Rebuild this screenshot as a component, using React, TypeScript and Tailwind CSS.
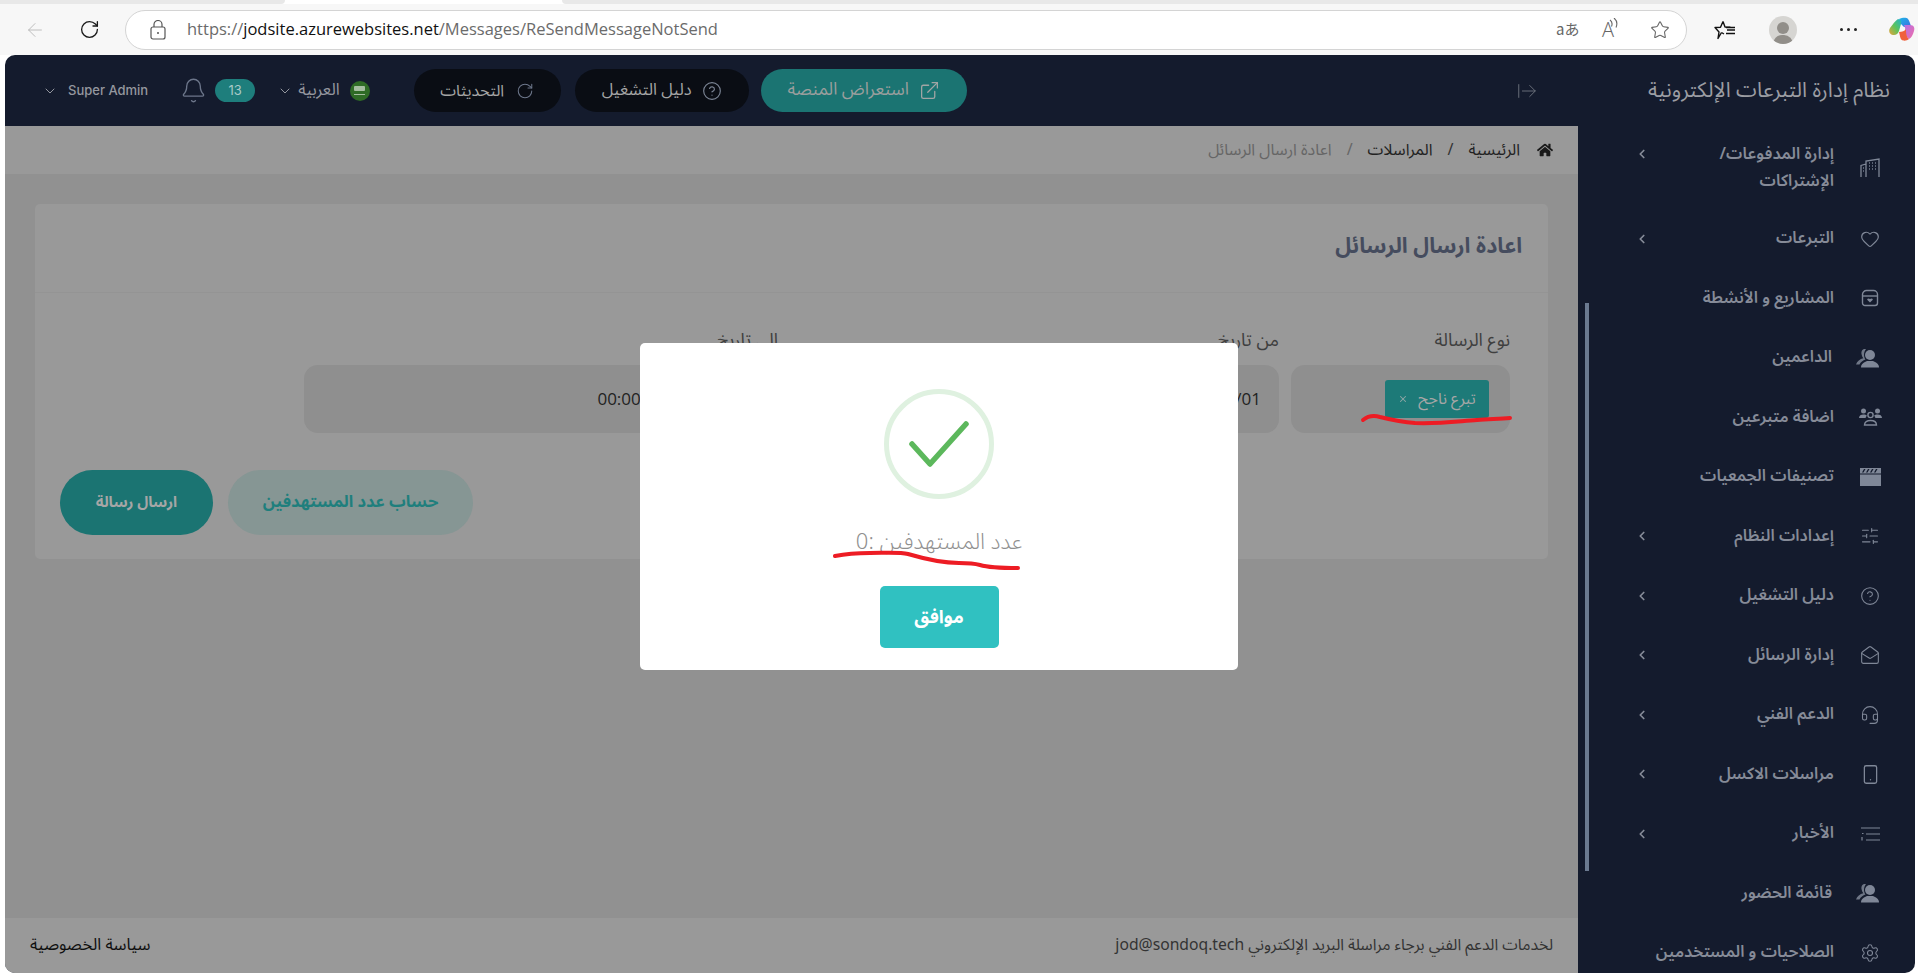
import React from "react";
import {
  ArrowLeft, RotateCw, Star, ChevronDown, ChevronLeft, Bell, CircleHelp, ExternalLink, ArrowRightFromLine,
  Heart, SlidersHorizontal, MailOpen, Headset, Smartphone, Settings, X,
} from "lucide-react";
import { FaHome } from "react-icons/fa";

const ar = "font-['Noto_Sans_Arabic','Noto_Naskh_Arabic','Noto_Sans','DejaVu_Sans',sans-serif]";

const BuildingIcon = () => (
  <svg width="20" height="20" viewBox="0 0 20 20" fill="none" stroke="currentColor" strokeWidth="1.3">
    <path d="M1 19V7.5L6 6M6 19V3l13-2v18" />
    <path d="M9 5h.9M12 5h.9M15 5h.9M9 8h.9M12 8h.9M15 8h.9M9 11h.9M12 11h.9M15 11h.9M3 10h.9M3 13h.9" strokeWidth="1.6" />
  </svg>
);
const BoxIcon = () => (
  <svg width="18" height="18" viewBox="0 0 18 18" fill="none" stroke="currentColor" strokeWidth="1.4">
    <path d="M1.5 5.500A4 4 0 0 1 5.500 1.500h7a4 4 0 0 1 4 4V14a2.500 2.500 0 0 1-2.500 2.500H4A2.500 2.500 0 0 1 1.500 14Z" />
    <path d="M1.5 7h15" />
    <path d="M9 13.500 6.400 11c-.8-1.200.9-2.300 2.600-1 1.700-1.300 3.400-.2 2.600 1Z" fill="currentColor" stroke="none" />
  </svg>
);
const DuoUserIcon = () => (
  <svg width="24" height="20" viewBox="0 0 24 20" fill="currentColor">
    <circle cx="14" cy="7" r="5" />
    <path d="M5 19.500c0-4 3.500-5.500 6-6.500h6c2.500 1 6 2.500 6 6.500Z" />
    <path d="M10 1c-3-.5-5 1.500-4.500 5 .2 1.600.8 3 1.800 4.200C4 11 1 13 0 16.500h3.500C4.500 14 7 12.500 9.500 11.500 8 9.500 7 5 10 1Z" opacity=".85" />
  </svg>
);
const GroupIcon = () => (
  <svg width="23" height="18" viewBox="0 0 23 18" fill="none" stroke="currentColor" strokeWidth="1.4">
    <circle cx="4.500" cy="3" r="2.500" fill="currentColor" stroke="none" />
    <circle cx="18.500" cy="3" r="2.500" fill="currentColor" stroke="none" />
    <path d="M0 10c0-2.500 2-3.500 4.500-3.500 1.500 0 2.500.3 3.300 1L6.500 10Zm23 0c0-2.500-2-3.500-4.500-3.500-1.500 0-2.500.3-3.300 1l1.300 2.500Z" fill="currentColor" stroke="none" />
    <circle cx="11.500" cy="7" r="2.600" />
    <path d="M5.500 17c0-3 2.500-4.500 6-4.500s6 1.500 6 4.500Z" />
  </svg>
);
const ClapIcon = () => (
  <svg width="21" height="18" viewBox="0 0 21 18" fill="currentColor">
    <path d="M0 6.500h21V18H0Z" />
    <path d="M0 0h21v5.500H0Zm4 1-2 3.500h1.500l2-3.500Zm4 0-2 3.500h1.500l2-3.500Zm4 0-2 3.500h1.500l2-3.500Zm4 0-2 3.500h1.500l2-3.500Z" fillRule="evenodd" />
  </svg>
);
const NewsIcon = () => (
  <svg width="19" height="14" viewBox="0 0 19 14" fill="none" stroke="currentColor" strokeWidth="1.2">
    <path d="M0 1h19M5 7h14M5 13h14M1 6.500h1.500M1 10v3.500" />
  </svg>
);
const LockIcon = () => (
  <svg width="16" height="20" viewBox="0 0 16 20" fill="none" stroke="#555" strokeWidth="1.2">
    <rect x="1" y="7" width="14" height="12" rx="2" />
    <path d="M4 7V4.500a4 4 0 0 1 8 0V7" />
    <circle cx="8" cy="13" r="1" fill="#555" stroke="none" />
  </svg>
);
const ReadAloud = () => (
  <svg width="20" height="14" viewBox="0 0 20 14" fill="none" stroke="#666" strokeWidth="1.1" className="-ml-[12px] -mt-[10px]">
    <path d="M8 2c2 1.500 2.500 4 1.500 6.500M12 0c3 2.500 3.500 6 2 9.500" />
  </svg>
);
const FavIcon = () => (
  <svg width="22" height="20" viewBox="0 0 22 20" fill="none" stroke="#111" strokeWidth="1.4" strokeLinejoin="round">
    <path d="M9 1.500 11 7l5 .3H14M7.500 12.500 4 18.500l1-6.500L1 7.500l5.500-.3L9 1.500M7.500 12.500 10 14" />
    <path d="M13 10h8M12 13.500h9M12 7.500h9" strokeWidth="1.300" />
  </svg>
);
const Copilot = () => (
  <svg width="28" height="28" viewBox="0 0 28 28">
    <defs>
      <linearGradient id="cp1" x1="0" y1="0" x2="1" y2="1"><stop offset="0" stopColor="#1fb5e8" /><stop offset="1" stopColor="#3b6fe0" /></linearGradient>
      <linearGradient id="cp2" x1="0" y1="1" x2="1" y2="0"><stop offset="0" stopColor="#e9a23b" /><stop offset=".5" stopColor="#5cc45a" /><stop offset="1" stopColor="#20b4cc" /></linearGradient>
      <linearGradient id="cp3" x1="0" y1="0" x2="1" y2="1"><stop offset="0" stopColor="#b66fe6" /><stop offset="1" stopColor="#ef6fa8" /></linearGradient>
    </defs>
    <path d="M11 3c3-1 7-2 9 0 1.500 2 2 4 3 7l-7 1-3-3Z" fill="url(#cp1)" />
    <path d="M10 3C7 5 5 8 2 12c-2 3 0 7 3 7 3 .4 5-1 6-4l2-7c.5-2 1-4-3-5Z" fill="url(#cp2)" />
    <path d="M16 9h6c4 0 5 3 4 6-1 4-3 7-5 8l-3-3c-1-4 0-7-2-11Z" fill="url(#cp3)" />
    <path d="M11 16c3 0 6-1 7-3 0 3 0 8 3 10-2 2-6 2-7 1-2-1-2-5-3-8Z" fill="#f0603c" />
  </svg>
);

const sideItems: { label: string; icon: React.ReactNode; chevron?: boolean; h?: string; mr?: string }[] = [
  { label: "إدارة المدفوعات/\nالإشتراكات", icon: <BuildingIcon />, chevron: true, h: "h-[83px]" },
  { label: "التبرعات", icon: <Heart size={20} strokeWidth={1.4} />, chevron: true },
  { label: "المشاريع و الأنشطة", icon: <BoxIcon /> },
  { label: "الداعمين", icon: <DuoUserIcon />, mr: "mr-[2px]" },
  { label: "اضافة متبرعين", icon: <GroupIcon /> },
  { label: "تصنيفات الجمعيات", icon: <ClapIcon /> },
  { label: "إعدادات النظام", icon: <SlidersHorizontal size={20} strokeWidth={1.3} />, chevron: true },
  { label: "دليل التشغيل", icon: <CircleHelp size={20} strokeWidth={1.3} />, chevron: true },
  { label: "إدارة الرسائل", icon: <MailOpen size={20} strokeWidth={1.3} />, chevron: true },
  { label: "الدعم الفني", icon: <Headset size={20} strokeWidth={1.3} />, chevron: true },
  { label: "مراسلات الاكسل", icon: <Smartphone size={21} strokeWidth={1.5} />, chevron: true },
  { label: "الأخبار", icon: <NewsIcon />, chevron: true },
  { label: "قائمة الحضور", icon: <DuoUserIcon />, mr: "mr-[2px]" },
  { label: "الصلاحيات و المستخدمين", icon: <Settings size={20} strokeWidth={1.3} /> },
];

function Field({ label, width, children }: { label: string; width: string; children: React.ReactNode }) {
  return (
    <div className={`${width} flex flex-col`}>
      <div dir="rtl" className="h-[38px] text-[18px] leading-[26px] text-[#3f3f3f]">{label}</div>
      <div className="h-[68px] rounded-[14px] bg-[#8f8f8f] flex items-center justify-end">{children}</div>
    </div>
  );
}

const DateValue = () => (
  <span className="pr-[18px] flex gap-[29px] text-[17px] font-['Open_Sans'] text-[#222] whitespace-nowrap">
    <span>00:00</span>
    <span>2025/01/01</span>
  </span>
);

export default function App() {
  return (
    <div className={`relative w-[1918px] h-[973px] overflow-hidden bg-white ${ar}`}>
      {/* Browser chrome */}
      <div className="h-[55px] bg-[#f7f7f7] flex flex-col">
        <div className="h-[4px] flex bg-white">
          <div className="w-[285px] bg-[#e8e8e8] rounded-br-[6px]" />
          <div className="w-[277px]" />
          <div className="flex-1 bg-[#e8e8e8] rounded-bl-[6px]" />
        </div>
        <div className="flex-1 flex items-center pl-[24px]">
          <ArrowLeft size={22} strokeWidth={1} className="text-[#b8b8b8]" />
          <RotateCw size={21} strokeWidth={1.5} className="ml-[33px] text-[#1a1a1a]" />
          <div className="ml-[25px] w-[1562px] h-[40px] rounded-full border-[1.5px] border-[#d4d4d4] bg-white flex items-center">
            <div className="ml-[24px] flex"><LockIcon /></div>
            <div className="ml-[21px] text-[16.500px] font-['Open_Sans'] text-[#6b6b6b] whitespace-nowrap">
              https://<span className="text-[#111]">jodsite.azurewebsites.net</span>/Messages/ReSendMessageNotSend
            </div>
            <div className="flex-1" />
            <div className="flex items-center gap-[20px] pr-[16px] text-[#666]">
              <span className="text-[15px] w-[26px] whitespace-nowrap font-['Noto_Sans_CJK_JP']">aあ</span>
              <div className="flex items-center w-[28px]">
                <span className="text-[20px] font-['Open_Sans'] font-light leading-none">A</span>
                <ReadAloud />
              </div>
              <Star size={20} strokeWidth={1.3} />
            </div>
          </div>
          <div className="ml-[27px] flex"><FavIcon /></div>
          <div className="ml-[33px] w-[28px] h-[28px] rounded-full bg-[#d6d5d2] flex flex-col items-center justify-end overflow-hidden">
            <div className="w-[12px] h-[12px] rounded-full bg-[#918e89] mb-[1px]" />
            <div className="w-[20px] h-[9px] rounded-t-full bg-[#918e89]" />
          </div>
          <div className="ml-[43px] flex gap-[4px]">
            <div className="w-[3px] h-[3px] rounded-full bg-[#222]" />
            <div className="w-[3px] h-[3px] rounded-full bg-[#222]" />
            <div className="w-[3px] h-[3px] rounded-full bg-[#222]" />
          </div>
          <div className="ml-[31px]"><Copilot /></div>
        </div>
      </div>

      {/* Application */}
      <div className="mx-[5px] w-[1910px] h-[918px] rounded-[10px] overflow-hidden flex flex-col bg-[#141b2d]">
        {/* Header */}
        <div className="h-[71px] shrink-0 flex items-center pl-[37px] text-[#94979f]">
          <ChevronDown size={16} strokeWidth={1.5} />
          <span className="ml-[10px] text-[13px] font-['Inter'] font-medium">Super Admin</span>
          <Bell size={27} strokeWidth={1.2} className="ml-[32px] text-[#6c768a]" />
          <div className="ml-[8px] w-[40px] h-[23px] rounded-full bg-[#1e7e7c] text-[#a9c9c7] text-[13px] font-['Inter'] flex items-center justify-center">13</div>
          <ChevronDown size={16} strokeWidth={1.5} className="ml-[22px]" />
          <span dir="rtl" className="ml-[5px] text-[16.500px]">العربية</span>
          <div className="ml-[10px] w-[20px] h-[20px] rounded-full bg-[#2f6b26] flex flex-col items-center justify-center gap-[3px]">
            <div className="w-[11px] h-[5px] bg-[#a5bda0] rounded-[1px]" />
            <div className="w-[11px] h-[1px] bg-[#a5bda0]" />
          </div>
          <div className="ml-[44px] w-[147px] h-[43px] rounded-full bg-[#0a0d14] flex items-center justify-center gap-[12px] text-[16px] text-[#a5a5a5]">
            <span dir="rtl">التحديثات</span>
            <RotateCw size={18} strokeWidth={1.4} className="text-[#6c768a]" />
          </div>
          <div className="ml-[14px] w-[174px] h-[43px] rounded-full bg-[#0a0d14] flex items-center justify-center gap-[10px] text-[16.500px] text-[#a5a5a5]">
            <span dir="rtl">دليل التشغيل</span>
            <CircleHelp size={20} strokeWidth={1.4} className="text-[#7b8494]" />
          </div>
          <div className="ml-[12px] w-[206px] h-[43px] rounded-full bg-[#1b7472] flex items-center justify-center gap-[10px] text-[17.500px] text-[#9a9e9d]">
            <span dir="rtl">استعراض المنصة</span>
            <ExternalLink size={21} strokeWidth={1.5} className="text-[#a1a5a4]" />
          </div>
          <ArrowRightFromLine size={22} strokeWidth={1} className="ml-[549px] text-[#70757f]" />
          <div className="flex-1" />
          <span dir="rtl" className="mr-[25px] text-[21px] text-[#9b9da3] whitespace-nowrap">نظام إدارة التبرعات الإلكترونية</span>
        </div>

        <div className="flex-1 min-h-0 flex">
          {/* Main */}
          <div className="w-[1573px] shrink-0 flex flex-col bg-[#919191]">
            <div className="h-[48px] shrink-0 bg-[#999999] flex items-center justify-end pr-[25px] text-[16px] gap-[15px]">
              <span dir="rtl" className="text-[#666666]">اعادة ارسال الرسائل</span>
              <span className="text-[#666666]">/</span>
              <span dir="rtl" className="text-[#222222]">المراسلات</span>
              <span className="text-[#333333]">/</span>
              <span dir="rtl" className="text-[#222222]">الرئيسية</span>
              <FaHome size={16} className="ml-[2px] text-[#1a1a1a]" />
            </div>
            <div className="flex-1 px-[30px] pt-[30px]">
              <div className="h-[355px] rounded-[5px] bg-[#999999] flex flex-col">
                <div className="h-[89px] shrink-0 border-b border-[#949494] flex items-center justify-end pr-[26px] pb-[4px]">
                  <h1 dir="rtl" className="text-[21.500px] font-bold text-[#454c5e]">اعادة ارسال الرسائل</h1>
                </div>
                <div className="flex justify-end gap-[12px] pt-[34px] pr-[38px]">
                  <Field label="الى تاريخ" width="w-[474px]"><DateValue /></Field>
                  <Field label="من تاريخ" width="w-[489px]"><DateValue /></Field>
                  <Field label="نوع الرسالة" width="w-[219px]">
                    <div className="mr-[21px] w-[104px] h-[38px] rounded-[3px] bg-[#1d7a78] flex items-center justify-center gap-[10px] text-[#a6a6a6] text-[16px]">
                      <X size={10} strokeWidth={2.5} className="text-[#8fa7a6]" />
                      <span dir="rtl">تبرع ناجح</span>
                    </div>
                  </Field>
                </div>
                <div className="flex gap-[15px] pl-[25px] pt-[37px]">
                  <button className="w-[153px] h-[65px] rounded-full bg-[#1b7472] text-[#a6a6a6] text-[15px] font-bold" dir="rtl">ارسال رسالة</button>
                  <button className="w-[245px] h-[65px] rounded-full bg-[#869694] text-[#1f7f7d] text-[16.500px] font-bold" dir="rtl">حساب عدد المستهدفين</button>
                </div>
              </div>
            </div>
            <div className="h-[55px] shrink-0 bg-[#999999] flex items-center justify-between px-[25px]">
              <span dir="rtl" className="text-[16.500px] text-[#0f0f0f]">سياسة الخصوصية</span>
              <span dir="rtl" className="text-[15.700px] text-[#333333]">لخدمات الدعم الفني برجاء مراسلة البريد الإلكتروني jod@sondoq.tech</span>
            </div>
          </div>

          {/* Sidebar */}
          <aside className="flex-1 relative flex flex-col" dir="rtl">
            {sideItems.map((it) => (
              <div key={it.label} className={`${it.h ?? "h-[59.5px]"} shrink-0 flex items-center pr-[31px] text-[#868b98]`}>
                <div className={`w-[28px] flex items-center justify-center text-[#7f8797] ${it.mr ?? ""}`}>{it.icon}</div>
                <div className="w-[184px] mr-[22px] text-[16.300px] font-semibold leading-[27px] whitespace-pre-line">{it.label}</div>
                <div className={`w-[16px] flex justify-center ${it.h ? "self-start mt-[21px]" : ""}`}>
                  {it.chevron && <ChevronLeft size={14} strokeWidth={3} className="text-[#868b98]" />}
                </div>
              </div>
            ))}
            <div className="absolute top-[177px] left-[7px] w-[4px] h-[568px] bg-[#6b7a90]" />
          </aside>
        </div>
      </div>

      {/* Success dialog */}
      <div className="absolute left-[640px] top-[343px] w-[598px] h-[327px] rounded-[5px] bg-white flex flex-col items-center pt-[46px]">
        <div className="w-[110px] h-[110px] rounded-full border-[5px] border-[#dff1e0] flex items-center justify-center">
          <svg width="62" height="46" viewBox="0 0 62 46" fill="none" stroke="#5cb85c" strokeWidth="5.500" strokeLinecap="round" strokeLinejoin="round">
            <path d="M4 23l18 20L58 3" />
          </svg>
        </div>
        <div dir="rtl" className="mt-[28px] text-[22px] leading-[30px] font-light text-[#8f8f8f]">عدد المستهدفين :0</div>
        <button className="mt-[29px] w-[119px] h-[62px] rounded-[5px] bg-[#30c1c1] text-white text-[18px] font-bold">موافق</button>
      </div>

      {/* Red pen annotations */}
      <svg className="absolute left-0 top-0 pointer-events-none" width="1918" height="973" fill="none" stroke="#ed1c24" strokeWidth="4" strokeLinecap="round" strokeLinejoin="round">
        <path d="M1363 420C1368 416 1373 415 1380 417 1392 420 1400 422 1415 423 1440 424 1460 421 1477 420 1490 419 1500 419 1510 418" />
        <path d="M835 556C845 554 855 553 870 553 885 553 900 552 908 554 925 559 945 563 959 563 968 563 973 563 980 565 990 568 1005 568 1018 568" />
      </svg>
    </div>
  );
}
